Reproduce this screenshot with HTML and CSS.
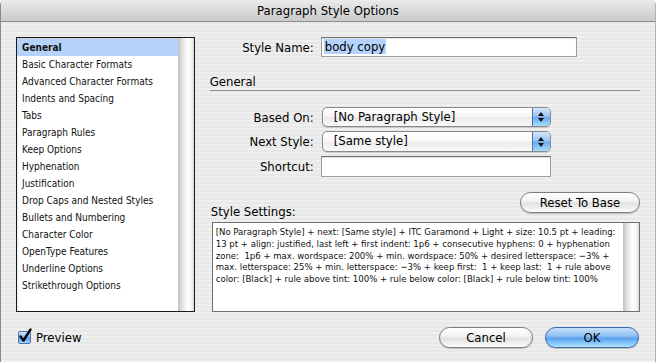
FILE: index.html
```html
<!DOCTYPE html>
<html>
<head>
<meta charset="utf-8">
<title>Paragraph Style Options</title>
<link rel="stylesheet" href="styles.css">
</head>
<body>
<div class="window">
  <div class="titlebar">Paragraph Style Options</div>
  <div class="content">
    <div class="main">
      <div class="list">
        <ul class="items">
          <li class="item selected">General</li>
          <li class="item">Basic Character Formats</li>
          <li class="item">Advanced Character Formats</li>
          <li class="item">Indents and Spacing</li>
          <li class="item">Tabs</li>
          <li class="item">Paragraph Rules</li>
          <li class="item">Keep Options</li>
          <li class="item">Hyphenation</li>
          <li class="item">Justification</li>
          <li class="item">Drop Caps and Nested Styles</li>
          <li class="item">Bullets and Numbering</li>
          <li class="item">Character Color</li>
          <li class="item">OpenType Features</li>
          <li class="item">Underline Options</li>
          <li class="item">Strikethrough Options</li>
        </ul>
        <div class="vtrack"></div>
      </div>
      <div class="panel">
        <div class="row">
          <span class="label">Style Name:</span>
          <div class="field name-field"><span class="sel">body copy</span></div>
        </div>
        <div class="section">General</div>
        <div class="row row-based">
          <span class="label">Based On:</span>
          <div class="popup">
            <span class="popup-text">[No Paragraph Style]</span>
            <span class="popup-arrows"><svg width="8" height="12" viewBox="0 0 8 12"><path d="M4 1 L7 5 L1 5 Z" fill="#111"/><path d="M1 7 L7 7 L4 11 Z" fill="#111"/></svg></span>
          </div>
        </div>
        <div class="row row-next">
          <span class="label">Next Style:</span>
          <div class="popup">
            <span class="popup-text">[Same style]</span>
            <span class="popup-arrows"><svg width="8" height="12" viewBox="0 0 8 12"><path d="M4 1 L7 5 L1 5 Z" fill="#111"/><path d="M1 7 L7 7 L4 11 Z" fill="#111"/></svg></span>
          </div>
        </div>
        <div class="row row-short">
          <span class="label">Shortcut:</span>
          <div class="field short-field"></div>
        </div>
        <div class="settings-head">
          <span class="settings-label">Style Settings:</span>
          <button class="btn reset">Reset To Base</button>
        </div>
        <div class="settings-box">
          <div class="settings-text">[No Paragraph Style] + next: [Same style] + ITC Garamond + Light + size: 10.5 pt + leading: 13 pt + align: justified, last left + first indent: 1p6 + consecutive hyphens: 0 + hyphenation zone:&nbsp; 1p6 + max. wordspace: 200% + min. wordspace: 50% + desired letterspace: −3% + max. letterspace: 25% + min. letterspace: −3% + keep first:&nbsp; 1 + keep last:&nbsp; 1 + rule above color: [Black] + rule above tint: 100% + rule below color: [Black] + rule below tint: 100%</div>
          <div class="vtrack"></div>
        </div>
      </div>
    </div>
    <div class="footer">
      <div class="preview">
        <span class="check"><svg width="13" height="13" viewBox="0 0 13 13"><path d="M2.5 6.5 L5.5 10.5 L12.5 -0.5" fill="none" stroke="#0a0a0a" stroke-width="2.4" stroke-linecap="round" stroke-linejoin="round"/></svg></span>
        <span class="preview-text">Preview</span>
      </div>
      <div class="buttons">
        <button class="btn">Cancel</button>
        <button class="btn default">OK</button>
      </div>
    </div>
  </div>
</div>
</body>
</html>
```

FILE: styles.css
```css
* { box-sizing: border-box; }
html, body { margin: 0; padding: 0; }
body { font-family: "DejaVu Sans Condensed", "DejaVu Sans", sans-serif; color: #000; }

.window {
  width: 656px;
  height: 362px;
  overflow: hidden;
  background: repeating-linear-gradient(to bottom, #efefef 0, #efefef 2px, #e8e8e8 2px, #e8e8e8 4px);
  border-left: 1px solid #8a8a8a;
  border-right: 1px solid #b0b0b0;
  border-radius: 5px 5px 0 0;
}

.titlebar {
  height: 22px;
  line-height: 21px;
  text-align: center;
  font-size: 13px;
  border-bottom: 1px solid #8e8e8e;
  background: linear-gradient(to bottom, #ebebeb 0%, #dadada 50%, #cbcbcb 100%);
}

.content { padding: 15px 15px 0 15px; }

.main { display: flex; height: 275px; }

.list {
  width: 179px;
  height: 275px;
  border: 1px solid #1a1a1a;
  background: #fff;
  display: flex;
  box-shadow: inset 0 1px 2px rgba(0,0,0,0.25);
}
.items { list-style: none; margin: 0; padding: 1px 0 0 0; flex: 1; }
.item {
  height: 17px;
  line-height: 17px;
  padding-left: 5px;
  font-size: 10px;
  white-space: nowrap;
  color: #111;
}
.item.selected { background: #b5d3fa; font-weight: bold; }

.vtrack {
  width: 16px;
  background: linear-gradient(to right, #c2c2c2 0%, #e6e6e6 30%, #ffffff 60%, #f4f4f4 85%, #d8d8d8 100%);
}

.panel { width: 430px; margin-left: 16px; display: flex; flex-direction: column; }

.row { display: flex; align-items: center; height: 20px; }
.label {
  width: 103px;
  text-align: right;
  font-size: 13px;
  margin-right: 7px;
  white-space: nowrap;
}
.field {
  height: 20px;
  background: #fff;
  border: 1px solid #9c9c9c;
  border-top-color: #6e6e6e;
  box-shadow: inset 0 1px 1px rgba(0,0,0,0.12);
  font-size: 13px;
  line-height: 18px;
  padding-left: 2px;
}
.name-field { width: 256px; }
.short-field { width: 230px; }
.sel { background: #b5d3fa; padding: 0 1px; }

.section {
  margin-top: 17px;
  height: 17px;
  line-height: 16px;
  font-size: 13px;
  border-bottom: 1px solid #8e8e8e;
  margin-left: -1px;
}

.row-based { margin-top: 16px; }
.row-next { margin-top: 4px; height: 21px; }
.row-short { margin-top: 4px; height: 21px; }
.row-short .field { height: 21px; }

.popup {
  margin-left: 1px;
  width: 229px;
  height: 20px;
  border: 1px solid #8a8a8a;
  border-radius: 5px;
  display: flex;
  overflow: hidden;
  background: linear-gradient(to bottom, #ffffff 0%, #f6f6f6 50%, #ebebeb 51%, #f8f8f8 100%);
  box-shadow: 0 1px 1px rgba(0,0,0,0.15);
}
.row-next .popup { height: 21px; }
.popup-text { flex: 1; font-size: 13px; line-height: 18px; padding-left: 11px; white-space: nowrap; }
.popup-arrows {
  width: 18px;
  display: flex;
  align-items: center;
  justify-content: center;
  border-left: 1px solid #4b74b8;
  background: linear-gradient(to bottom, #d2e6fb 0%, #9cc6f3 45%, #6aa9ee 52%, #a9dcff 100%);
}

.settings-head {
  margin-top: 15px;
  height: 30px;
  display: flex;
  justify-content: space-between;
  align-items: flex-start;
}
.settings-label { font-size: 13px; padding-top: 12px; line-height: 16px; }

.btn {
  font-family: inherit;
  font-size: 13px;
  font-weight: normal;
  height: 21px;
  padding: 0;
  border: 1px solid #7a7a7a;
  border-radius: 11px;
  color: #000;
  background: linear-gradient(to bottom, #ffffff 0%, #f4f4f4 40%, #e2e2e2 55%, #f2f2f2 85%, #ffffff 100%);
  box-shadow: 0 1px 1px rgba(0,0,0,0.2);
}
.reset { width: 120px; }

.settings-box {
  margin-left: 1px;
  height: 90px;
  border: 1px solid #6f6f6f;
  background: #fff;
  display: flex;
}
.settings-text {
  flex: 1;
  font-size: 9.5px;
  line-height: 11.75px;
  padding: 3px 2px 0 3px;
  color: #111;
}

.footer {
  margin-top: 15px;
  height: 20px;
  display: flex;
  justify-content: space-between;
  align-items: center;
}
.preview { display: flex; align-items: center; margin-left: 2px; }
.check {
  width: 13px;
  height: 13px;
  border: 1px solid #5275ad;
  border-radius: 2px;
  background: linear-gradient(to bottom, #cfe6fc 0%, #87bcf2 45%, #5c9fe9 55%, #a3d6ff 100%);
  display: flex;
}
.check svg { margin: -2px 0 0 -1px; overflow: visible; }
.preview-text { font-size: 13px; margin-left: 5px; }

.buttons { display: flex; gap: 12px; margin-right: 1px; }
.buttons .btn { width: 94px; }
.btn.default {
  border-color: #3c66ad;
  background: linear-gradient(to bottom, #c6e0fa 0%, #93c3f4 40%, #5ea2ee 55%, #8fcfff 85%, #b8e6ff 100%);
}
```
